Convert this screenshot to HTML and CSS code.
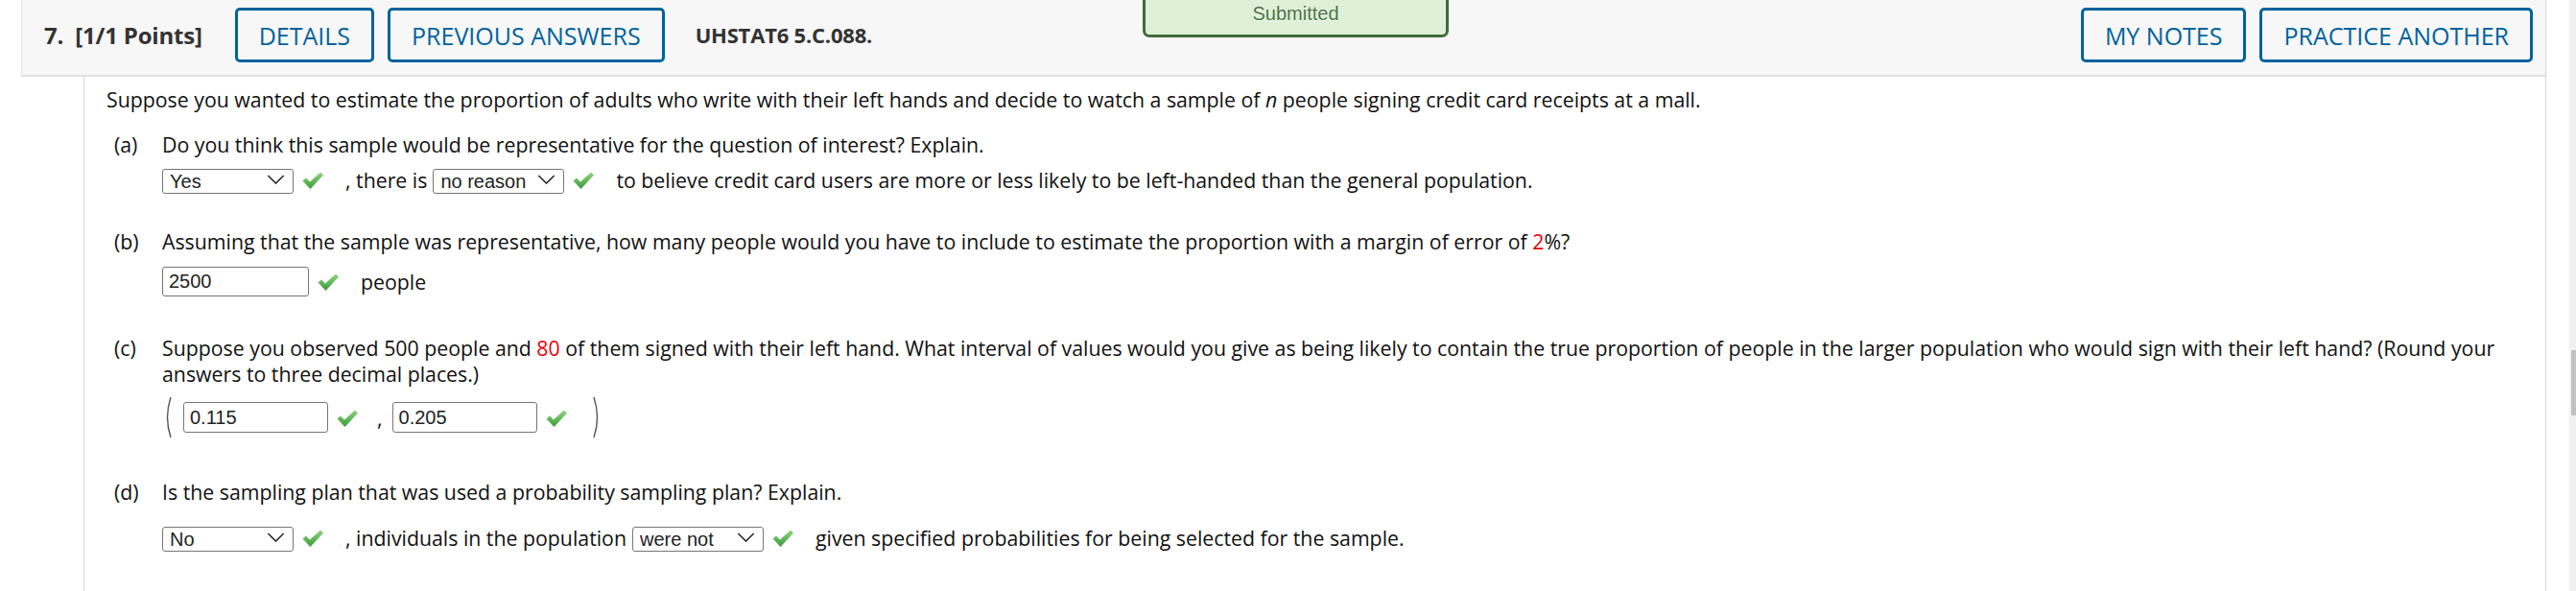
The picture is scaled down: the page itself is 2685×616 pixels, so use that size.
FILE: index.html
```html
<!DOCTYPE html>
<html lang="en">
<head>
<meta charset="utf-8">
<title>Question 7</title>
<link rel="stylesheet" href="styles.css">
</head>
<body>
<svg class="defs" width="0" height="0" aria-hidden="true">
  <defs>
    <linearGradient id="chkGrad" x1="0" y1="0" x2="0" y2="1">
      <stop offset="0" stop-color="#8fd67c"/>
      <stop offset="1" stop-color="#3b9a3b"/>
    </linearGradient>
    <symbol id="chk" viewBox="0 0 24 20">
      <path d="M1.5 10.5 L5 7.5 L9 11.5 L20 1.5 L23 4.5 L9.5 19 Z" fill="url(#chkGrad)"/>
    </symbol>
    <symbol id="chev" viewBox="0 0 20 11">
      <path d="M1 1 L10 10 L19 1" fill="none" stroke="#222" stroke-width="1.6"/>
    </symbol>
  </defs>
</svg>
<div class="page">
  <div class="main">
    <section class="question">
      <header class="q-header">
        <span class="q-num">7.&nbsp; [1/1 Points]</span>
        <button class="btn">DETAILS</button>
        <button class="btn">PREVIOUS ANSWERS</button>
        <span class="q-code">UHSTAT6 5.C.088.</span>
        <div class="toast">Submitted</div>
        <div class="header-right">
          <button class="btn">MY NOTES</button>
          <button class="btn">PRACTICE ANOTHER</button>
        </div>
      </header>
      <div class="q-body">
        <p class="intro">Suppose you wanted to estimate the proportion of adults who write with their left hands and decide to watch a sample of <i>n</i> people signing credit card receipts at a mall.</p>

        <div class="part part-a">
          <span class="label">(a)</span>
          <div class="part-content">
            <p>Do you think this sample would be representative for the question of interest? Explain.</p>
            <div class="answers row-a">
              <span class="sel"><select aria-label="representative"><option>Yes</option></select><svg class="chev"><use href="#chev"/></svg></span>
              <svg class="check"><use href="#chk"/></svg>
              <span class="txt">, there is</span>
              <span class="sel"><select aria-label="reason"><option>no reason</option></select><svg class="chev"><use href="#chev"/></svg></span>
              <svg class="check"><use href="#chk"/></svg>
              <span class="txt">to believe credit card users are more or less likely to be left-handed than the general population.</span>
            </div>
          </div>
        </div>

        <div class="part part-b">
          <span class="label">(b)</span>
          <div class="part-content">
            <p>Assuming that the sample was representative, how many people would you have to include to estimate the proportion with a margin of error of <span class="red">2</span>%?</p>
            <div class="answers row-b">
              <input class="num" type="text" value="2500" aria-label="people">
              <svg class="check"><use href="#chk"/></svg>
              <span class="txt">people</span>
            </div>
          </div>
        </div>

        <div class="part part-c">
          <span class="label">(c)</span>
          <div class="part-content">
            <p>Suppose you observed 500 people and <span class="red">80</span> of them signed with their left hand. What interval of values would you give as being likely to contain the true proportion of people in the larger population who would sign with their left hand? (Round your answers to three decimal places.)</p>
            <div class="answers row-c">
              <svg class="paren" viewBox="0 0 8 44"><path d="M7 1 Q0 22 7 43" fill="none" stroke="#555" stroke-width="1.4"/></svg>
              <input class="num" type="text" value="0.115" aria-label="lower">
              <svg class="check"><use href="#chk"/></svg>
              <span class="comma">,</span>
              <input class="num" type="text" value="0.205" aria-label="upper">
              <svg class="check"><use href="#chk"/></svg>
              <svg class="paren" viewBox="0 0 8 44"><path d="M1 1 Q8 22 1 43" fill="none" stroke="#555" stroke-width="1.4"/></svg>
            </div>
          </div>
        </div>

        <div class="part part-d">
          <span class="label">(d)</span>
          <div class="part-content">
            <p>Is the sampling plan that was used a probability sampling plan? Explain.</p>
            <div class="answers row-d">
              <span class="sel"><select aria-label="probability"><option>No</option></select><svg class="chev"><use href="#chev"/></svg></span>
              <svg class="check"><use href="#chk"/></svg>
              <span class="txt">, individuals in the population</span>
              <span class="sel"><select aria-label="given"><option>were not</option></select><svg class="chev"><use href="#chev"/></svg></span>
              <svg class="check"><use href="#chk"/></svg>
              <span class="txt">given specified probabilities for being selected for the sample.</span>
            </div>
          </div>
        </div>
      </div>
    </section>
  </div>
  <div class="scrollbar"><div class="thumb"></div></div>
</div>
</body>
</html>
```

FILE: styles.css
```css
html, body {
  margin: 0;
  padding: 0;
  background: #ffffff;
}

body {
  font-family: "Open Sans", "DejaVu Sans", sans-serif;
  color: #111;
}

.defs {
  position: absolute;
  width: 0;
  height: 0;
  overflow: hidden;
}

.page {
  display: flex;
  height: 616px;
  overflow: hidden;
}

.main {
  flex: 1;
  min-width: 0;
}

.scrollbar {
  width: 7px;
  background: #f1f1f1;
  display: flex;
  flex-direction: column;
  align-items: flex-end;
}

.thumb {
  width: 5px;
  height: 68px;
  margin-top: 365px;
  background: #c1c1c1;
}

.question {
  margin: 0 24px 0 22px;
  height: 616px;
  border-right: 1px solid #d6d6d6;
  box-sizing: border-box;
}

/* header */
.q-header {
  position: relative;
  height: 80px;
  box-sizing: border-box;
  background: #f7f7f7;
  border-bottom: 2px solid #e1e1e1;
  border-left: 1px solid #e9e9e9;
  display: flex;
  align-items: flex-start;
  padding: 8px 13px 0 23px;
}

.q-num,
.q-code {
  font-weight: 700;
  color: #333;
  line-height: 57px;
}

.q-num {
  font-size: 24px;
  letter-spacing: -0.2px;
  margin-right: 34px;
}

.q-code {
  font-size: 22px;
  letter-spacing: -0.2px;
  margin-left: 18px;
}

.btn {
  height: 57px;
  box-sizing: border-box;
  border: 3px solid #00639c;
  border-radius: 5px;
  background: transparent;
  color: #00639c;
  font-family: "Open Sans", sans-serif;
  font-size: 25px;
  padding: 0 22px;
  margin-right: 14px;
  cursor: pointer;
}

.header-right {
  margin-left: auto;
  display: flex;
}

.header-right .btn:last-child {
  margin-right: 0;
}

.toast {
  position: absolute;
  left: 1168px;
  top: -6px;
  width: 319px;
  height: 45px;
  box-sizing: border-box;
  background: #dff0d8;
  border: 3px solid #3f6b38;
  border-radius: 0 0 7px 7px;
  font-family: "Liberation Sans", Arial, sans-serif;
  font-size: 20px;
  color: #4a7444;
  text-align: center;
  padding-top: 6px;
  text-shadow: 0 1px 0 #fff;
}

/* body */
.q-body {
  margin-left: 65px;
  border-left: 1px solid #d6d6d6;
  height: 536px;
  padding-left: 23px;
  padding-top: 10px;
  box-sizing: border-box;
  font-size: 21.3px;
  line-height: 27px;
  color: #111;
}

.q-body p {
  margin: 0;
}

.part {
  display: flex;
  margin-left: 8px;
}

.part-a { margin-top: 20px; }
.part-b { margin-top: 36px; }
.part-c { margin-top: 40px; }
.part-d { margin-top: 42px; }

.label {
  width: 50px;
  flex: none;
}

.part-content {
  flex: 1;
  padding-right: 40px;
}

.answers {
  display: flex;
  align-items: center;
}

.row-a { height: 30px; margin-top: 8px; }
.row-b { height: 32px; margin-top: 12px; }
.row-c { height: 44px; margin-top: 10px; }
.row-d { height: 30px; margin-top: 19px; }

.sel {
  position: relative;
  display: inline-block;
  width: 137px;
  height: 26px;
  flex: none;
}

.sel select {
  appearance: none;
  -webkit-appearance: none;
  width: 100%;
  height: 100%;
  box-sizing: border-box;
  border: 1px solid #767676;
  border-radius: 3px;
  background: #fff;
  font-family: "Liberation Sans", Arial, sans-serif;
  font-size: 20px;
  color: #222;
  padding: 0 0 0 7px;
  margin: 0;
}

.chev {
  position: absolute;
  right: 9px;
  top: 8px;
  width: 19px;
  height: 10px;
  pointer-events: none;
}

.check {
  width: 24px;
  height: 20px;
  flex: none;
  margin: 2px 22px 0 8px;
}

.txt {
  margin-right: 6px;
  white-space: nowrap;
}

.num {
  width: 153px;
  height: 31px;
  box-sizing: border-box;
  border: 1px solid #767676;
  border-radius: 3px;
  font-family: "Liberation Sans", Arial, sans-serif;
  font-size: 20px;
  color: #222;
  padding: 0 6px;
  margin: 0;
}

.row-c .num {
  width: 151px;
  height: 32px;
}

.paren {
  width: 8px;
  height: 44px;
  flex: none;
}

.row-c .paren:first-child {
  margin-left: 2px;
  margin-right: 12px;
}

.row-c .check {
  margin-right: 19px;
}

.row-c .paren:last-child {
  margin-left: 7px;
}

.comma {
  margin-right: 10px;
}

.red {
  color: #e8000b;
}
```
